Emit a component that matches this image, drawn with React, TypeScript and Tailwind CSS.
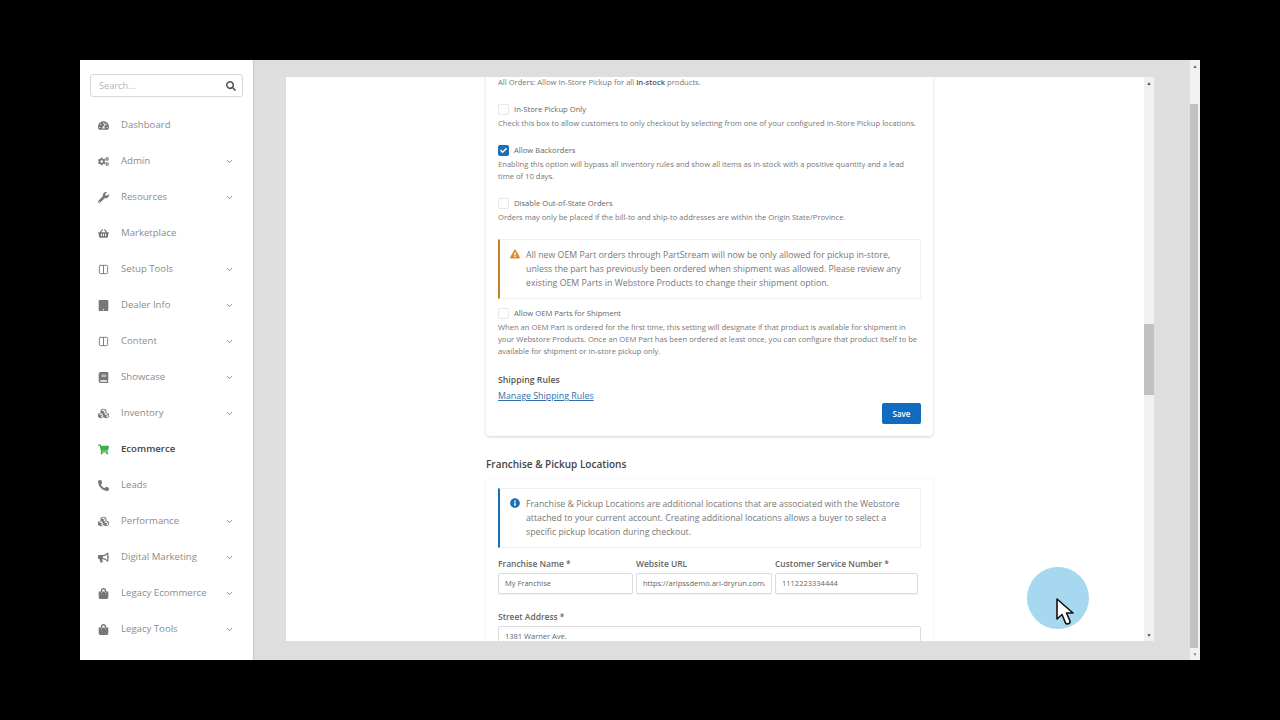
import React from "react";
import { FaTachometerAlt, FaCogs, FaWrench, FaShoppingBasket, FaTablet, FaBook, FaCubes, FaShoppingCart, FaPhoneAlt, FaBullhorn, FaShoppingBag, FaSearch, FaExclamationTriangle, FaInfoCircle, FaCheck } from "react-icons/fa";
import { LuChevronDown, LuColumns2 } from "react-icons/lu";

const nav: [string, React.ComponentType<{ className?: string }>, boolean][] = [
  ["Dashboard", FaTachometerAlt, false],
  ["Admin", FaCogs, true],
  ["Resources", FaWrench, true],
  ["Marketplace", FaShoppingBasket, false],
  ["Setup Tools", LuColumns2, true],
  ["Dealer Info", FaTablet, true],
  ["Content", LuColumns2, true],
  ["Showcase", FaBook, true],
  ["Inventory", FaCubes, true],
  ["Ecommerce", FaShoppingCart, false],
  ["Leads", FaPhoneAlt, false],
  ["Performance", FaCubes, true],
  ["Digital Marketing", FaBullhorn, true],
  ["Legacy Ecommerce", FaShoppingBag, true],
  ["Legacy Tools", FaShoppingBag, true],
];

function Check({ label, checked, className }: { label: string; checked?: boolean; className?: string }) {
  return (
    <div className={`flex items-center h-[12px] ${className ?? ""}`}>
      {checked ? (
        <span className="w-[11px] h-[11px] rounded-[2px] bg-[#1b6fb5] flex items-center justify-center">
          <FaCheck className="text-white text-[7px]" />
        </span>
      ) : (
        <span className="w-[11px] h-[11px] rounded-[2px] border border-[#e8e8e8] bg-white" />
      )}
      <span className="ml-[5px] pt-[1px] text-[7.65px] text-[#666]">{label}</span>
    </div>
  );
}

function Desc({ children, className }: { children: React.ReactNode; className?: string }) {
  return <p className={`text-[7.62px] leading-[12px] text-[#777] ${className ?? ""}`}>{children}</p>;
}

function Field({ label, value, width }: { label: string; value: string; width: string }) {
  return (
    <div className={`flex flex-col ${width}`}>
      <span className="text-[8.45px] leading-[14px] font-semibold text-[#666]">{label}</span>
      <div className="mt-[2px] h-[21px] border border-[#dcdcdc] rounded-[2px] bg-white flex items-center px-[6px] whitespace-nowrap text-[7.5px] text-[#666] shadow-[0_1px_1px_rgba(0,0,0,0.06)]">
        <span className="block overflow-hidden">{value}</span>
      </div>
    </div>
  );
}

function Callout({ color, icon, children, className }: { color: string; icon: React.ReactNode; children: React.ReactNode; className?: string }) {
  return (
    <div className={`flex border border-[#f1f1f1] border-l-[2px] ${color} pl-[10px] pr-[12px] py-[8px] ${className ?? ""}`}>
      <span className="w-[16px] pt-[1px] text-[10px] shrink-0">{icon}</span>
      <p className="text-[8.78px] leading-[14px] text-[#777]">{children}</p>
    </div>
  );
}

export default function App() {
  return (
    <div className="h-screen w-full bg-black flex items-center justify-center" style={{ fontFamily: '"Open Sans", sans-serif' }}>
      <div className="relative w-[1120px] h-[600px] flex bg-[#dedede] overflow-hidden">
        <aside className="w-[173px] shrink-0 bg-white shadow-[1px_0_1px_#c8c8c8] pt-[14px] px-[10px] z-10">
          <div className="h-[23px] w-[153px] border border-[#d8d8d8] rounded-[3px] flex items-center justify-between pl-[8px] pr-[6px]">
            <span className="text-[9.2px] text-[#b5b5b5] pt-[1px]">Search...</span>
            <FaSearch className="text-[10px] text-[#555]" />
          </div>
          <nav className="mt-[10px]">
            {nav.map(([name, Icon, chev]) => (
              <div key={name} className="h-[36px] flex items-center">
                <span className="w-[31px] pl-[8px] shrink-0 flex">
                  <Icon className={`text-[11px] ${name === "Ecommerce" ? "text-[#3fae4a]" : "text-[#777]"}`} />
                </span>
                <span className={`text-[9.6px] ${name === "Ecommerce" ? "font-semibold text-[#444]" : "text-[#8c8c8c]"}`}>{name}</span>
                {chev && <LuChevronDown className="ml-auto mr-[9px] text-[9px] text-[#666]" />}
              </div>
            ))}
          </nav>
        </aside>

        <main className="flex-1 flex pl-[33px] pt-[17px] pb-[19px]">
          <div className="w-[868px] flex bg-white h-[564px]">
            <div className="flex-1 overflow-hidden pl-[200px]">
              <div className="w-[447px] px-[12px] pb-[12px] bg-white rounded-b-[4px] shadow-[0_1px_3px_rgba(0,0,0,0.18)]">
                <Desc className="-mt-[1px]">All Orders: Allow In-Store Pickup for all <b className="font-semibold text-[#555]">in-stock</b> products.</Desc>
                <Check label="In-Store Pickup Only" className="mt-[15px]" />
                <Desc className="mt-[2px]">Check this box to allow customers to only checkout by selecting from one of your configured In-Store Pickup locations.</Desc>
                <Check label="Allow Backorders" checked className="mt-[15px]" />
                <Desc className="mt-[2px]">Enabling this option will bypass all inventory rules and show all items as in-stock with a positive quantity and a lead<br />time of 10 days.</Desc>
                <Check label="Disable Out-of-State Orders" className="mt-[15px]" />
                <Desc className="mt-[2px]">Orders may only be placed if the bill-to and ship-to addresses are within the Origin State/Province.</Desc>
                <Callout color="border-l-[#c47f2c]" className="mt-[16px]" icon={<FaExclamationTriangle className="text-[#e08a2e]" />}>
                  All new OEM Part orders through PartStream will now be only allowed for pickup in-store, unless the part has previously been ordered when shipment was allowed. Please review any existing OEM Parts in Webstore Products to change their shipment option.
                </Callout>
                <Check label="Allow OEM Parts for Shipment" className="mt-[8px]" />
                <Desc className="mt-[2px]">When an OEM Part is ordered for the first time, this setting will designate if that product is available for shipment in your Webstore Products. Once an OEM Part has been ordered at least once, you can configure that product itself to be available for shipment or in-store pickup only.</Desc>
                <h4 className="mt-[16px] text-[8.75px] leading-[14px] font-semibold text-[#555]">Shipping Rules</h4>
                <a className="block mt-[2px] text-[8.86px] leading-[14px] text-[#2f6fb0] underline">Manage Shipping Rules</a>
                <div className="flex justify-end">
                  <button className="w-[39px] h-[21px] rounded-[2px] bg-[#0f6cbf] text-white text-[8px] font-semibold">Save</button>
                </div>
              </div>
              <h3 className="mt-[21px] text-[10px] leading-[14px] font-semibold text-[#444]">Franchise &amp; Pickup Locations</h3>
              <div className="mt-[8px] w-[447px] pt-[9px] px-[12px] bg-white shadow-[0_0_2px_rgba(0,0,0,0.08)]">
                <Callout color="border-l-[#1b6fb5]" icon={<FaInfoCircle className="text-[#1b6fb5]" />}>
                  Franchise &amp; Pickup Locations are additional locations that are associated with the Webstore attached to your current account. Creating additional locations allows a buyer to select a specific pickup location during checkout.
                </Callout>
                <div className="flex gap-[3px] mt-[9px]">
                  <Field label="Franchise Name *" value="My Franchise" width="w-[135px]" />
                  <Field label="Website URL" value="https://aripssdemo.ari-dryrun.com/" width="w-[136px]" />
                  <Field label="Customer Service Number *" value="1112223334444" width="w-[143px]" />
                </div>
                <div className="mt-[16px]">
                  <Field label="Street Address *" value="1381 Warner Ave." width="w-full" />
                </div>
              </div>
            </div>
            <div className="w-[10px] shrink-0 bg-[#f1f1f1] flex flex-col items-center">
              <span className="mt-[3px] text-[5px] leading-[6px] text-[#444]">▲</span>
              <div className="mt-[238px] w-full h-[71px] bg-[#c1c1c1]" />
              <span className="mt-auto mb-[3px] text-[5px] leading-[6px] text-[#444]">▼</span>
            </div>
          </div>
        </main>

        <div className="w-[10px] shrink-0 bg-[#f1f1f1] flex flex-col items-center">
          <span className="mt-[3px] text-[5px] leading-[6px] text-[#666]">▲</span>
          <div className="mt-[35px] w-[8px] self-start h-[544px] bg-[#c1c1c1]" />
          <span className="mt-auto mb-[3px] text-[5px] leading-[6px] text-[#888]">▼</span>
        </div>

        <div className="absolute left-[947px] top-[507px] w-[62px] h-[62px] rounded-full bg-[#a6d8f0]" />
        <svg className="absolute left-[975px] top-[537px]" width="20" height="29" viewBox="0 0 20 29">
          <path d="M2 2 L2 22 L7 17.5 L10.5 26 Q11.5 27.5 14 26.5 Q15.5 25.5 15 24 L11.5 16 L18 16 Z" fill="#fff" stroke="#111" strokeWidth="1.6" strokeLinejoin="round" />
        </svg>
      </div>
    </div>
  );
}
